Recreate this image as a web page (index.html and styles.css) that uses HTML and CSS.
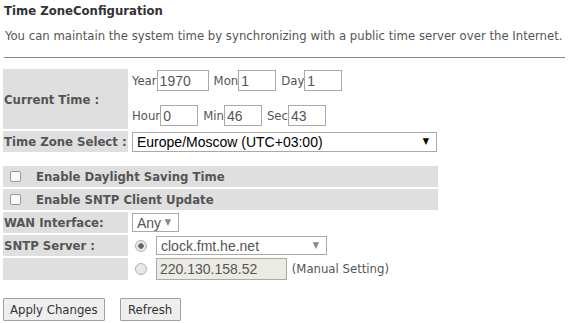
FILE: index.html
```html
<!DOCTYPE html>
<html lang="en">
<head>
    <meta charset="UTF-8">
    <title>Time Zone Configuration</title>
    <link rel="stylesheet" href="styles.css">
</head>
<body>

<div class="page-title">Time ZoneConfiguration</div>
<div class="intro">You can maintain the system time by synchronizing with a public time server over the Internet.</div>
<hr class="divider">

<form class="tz-form">
    <table class="cfg-table">
        <tr class="row-time">
            <td class="label-cell">Current Time :</td>
            <td class="value-cell">
                <div class="time-line">
                    <label class="field">Year<input type="text" class="num wide" value="1970"></label>
                    <label class="field">Mon<input type="text" class="num" value="1"></label>
                    <label class="field">Day<input type="text" class="num" value="1"></label>
                </div>
                <div class="time-line">
                    <label class="field">Hour<input type="text" class="num" value="0"></label>
                    <label class="field">Min<input type="text" class="num" value="46"></label>
                    <label class="field">Sec<input type="text" class="num" value="43"></label>
                </div>
            </td>
        </tr>
        <tr class="row-std">
            <td class="label-cell">Time Zone Select :</td>
            <td class="value-cell">
                <span class="select-wrap tz">
                    <select class="pick">
                        <option>Europe/Moscow (UTC+03:00)</option>
                    </select>
                </span>
            </td>
        </tr>
        <tr class="spacer"><td colspan="2"></td></tr>
        <tr class="row-std">
            <td class="check-cell" colspan="2"><input type="checkbox" class="check">Enable Daylight Saving Time</td>
        </tr>
        <tr class="row-std">
            <td class="check-cell" colspan="2"><input type="checkbox" class="check">Enable SNTP Client Update</td>
        </tr>
        <tr class="row-std">
            <td class="label-cell">WAN Interface:</td>
            <td class="value-cell">
                <span class="select-wrap any muted">
                    <select class="pick" disabled>
                        <option>Any</option>
                    </select>
                </span>
            </td>
        </tr>
        <tr class="row-std">
            <td class="label-cell">SNTP Server :</td>
            <td class="value-cell">
                <input type="radio" name="server" class="radio" checked disabled><span class="select-wrap server muted">
                    <select class="pick" disabled>
                        <option>clock.fmt.he.net</option>
                    </select>
                </span>
            </td>
        </tr>
        <tr class="row-std">
            <td class="label-cell"></td>
            <td class="value-cell">
                <input type="radio" name="server" class="radio" disabled><input type="text" class="manual" value="220.130.158.52" disabled>
                <span class="hint">(Manual Setting)</span>
            </td>
        </tr>
    </table>

    <div class="actions">
        <button type="button" class="btn">Apply Changes</button>
        <button type="button" class="btn">Refresh</button>
    </div>
</form>

</body>
</html>
```

FILE: styles.css
```css
body {
    margin: 0;
    padding: 4px 3px;
    font-family: "DejaVu Sans Condensed", "Liberation Sans", sans-serif;
    font-size: 13px;
    color: #555;
    background-color: #fff;
}

.page-title {
    font-weight: bold;
    color: #333;
    line-height: 14px;
    padding-left: 1px;
}

.intro {
    margin-top: 10px;
    padding-left: 2px;
    line-height: 16px;
}

.divider {
    border: none;
    border-top: 1px solid #888;
    margin: 13px 0 0 1px;
    width: 561px;
}

.tz-form {
    margin-top: 9px;
}

.cfg-table {
    border-collapse: separate;
    border-spacing: 0 2px;
    width: 435px;
}

.cfg-table td {
    padding: 0;
}

.label-cell {
    width: 124px;
    background-color: #dfdfdf;
    font-weight: bold;
    padding-left: 1px !important;
    white-space: nowrap;
}

.value-cell {
    padding-left: 4px !important;
    white-space: nowrap;
}

.row-time {
    height: 60px;
}

.row-std {
    height: 21px;
}

.spacer td {
    height: 10px;
}

.time-line {
    display: flex;
    gap: 5px;
    height: 21px;
}

.time-line + .time-line {
    margin-top: 14px;
}

.row-time .value-cell {
    vertical-align: top;
    padding-top: 1px !important;
}

.field {
    display: flex;
    align-items: center;
}

.num {
    box-sizing: border-box;
    width: 38px;
    height: 21px;
    margin: 0;
    padding: 0 2px;
    border: 1px solid #a9a9a9;
    font-family: "Liberation Sans", sans-serif;
    font-size: 14px;
    color: #555;
}

.num.wide {
    width: 52px;
}

.select-wrap {
    position: relative;
    display: inline-block;
    vertical-align: middle;
}

.select-wrap::after {
    content: "\25BC";
    position: absolute;
    right: 8px;
    top: 4px;
    font-size: 9px;
    color: #000;
    pointer-events: none;
}

.select-wrap.muted::after {
    color: #888;
}

.pick {
    appearance: none;
    -webkit-appearance: none;
    box-sizing: border-box;
    height: 20px;
    margin: 0;
    padding: 0 4px;
    border: 1px solid #a9a9a9;
    background-color: #fff;
    font-family: "Liberation Sans", sans-serif;
    font-size: 14px;
    color: #000;
}

.muted .pick {
    color: #555;
    opacity: 1;
}

.tz .pick {
    width: 305px;
}

.any .pick {
    width: 47px;
    height: 19px;
}

.server .pick {
    width: 171px;
    height: 19px;
}

.check-cell {
    background-color: #dfdfdf;
    font-weight: bold;
    padding-left: 7px !important;
}

.check {
    appearance: none;
    -webkit-appearance: none;
    box-sizing: border-box;
    width: 11px;
    height: 11px;
    margin: 0 15px 0 0;
    border: 1px solid #9a9a9a;
    border-radius: 2px;
    background-color: #fafafa;
    vertical-align: -1px;
}

.radio {
    appearance: none;
    -webkit-appearance: none;
    box-sizing: border-box;
    width: 12px;
    height: 12px;
    margin: 0 9px 0 3px;
    border: 1px solid #b0b0b0;
    border-radius: 50%;
    background-color: #e8e8e8;
    vertical-align: middle;
}

.radio:checked {
    background: radial-gradient(circle, #666 0 2.5px, #e8e8e8 3px);
}

.manual {
    box-sizing: border-box;
    width: 131px;
    height: 22px;
    margin: 0;
    padding: 0 3px;
    border: 1px solid #a9a9a9;
    background-color: #ebebe4;
    font-family: "Liberation Sans", sans-serif;
    font-size: 14px;
    color: #555;
    vertical-align: middle;
}

.hint {
    margin-left: 1px;
}

.actions {
    display: flex;
    gap: 15px;
    margin-top: 16px;
}

.btn {
    box-sizing: border-box;
    height: 23px;
    min-width: 61px;
    padding: 0 6px;
    border: 1px solid #a0a0a0;
    border-radius: 1px;
    background-color: #eee;
    font-family: "DejaVu Sans Condensed", "Liberation Sans", sans-serif;
    font-size: 13px;
    color: #333;
}
```
